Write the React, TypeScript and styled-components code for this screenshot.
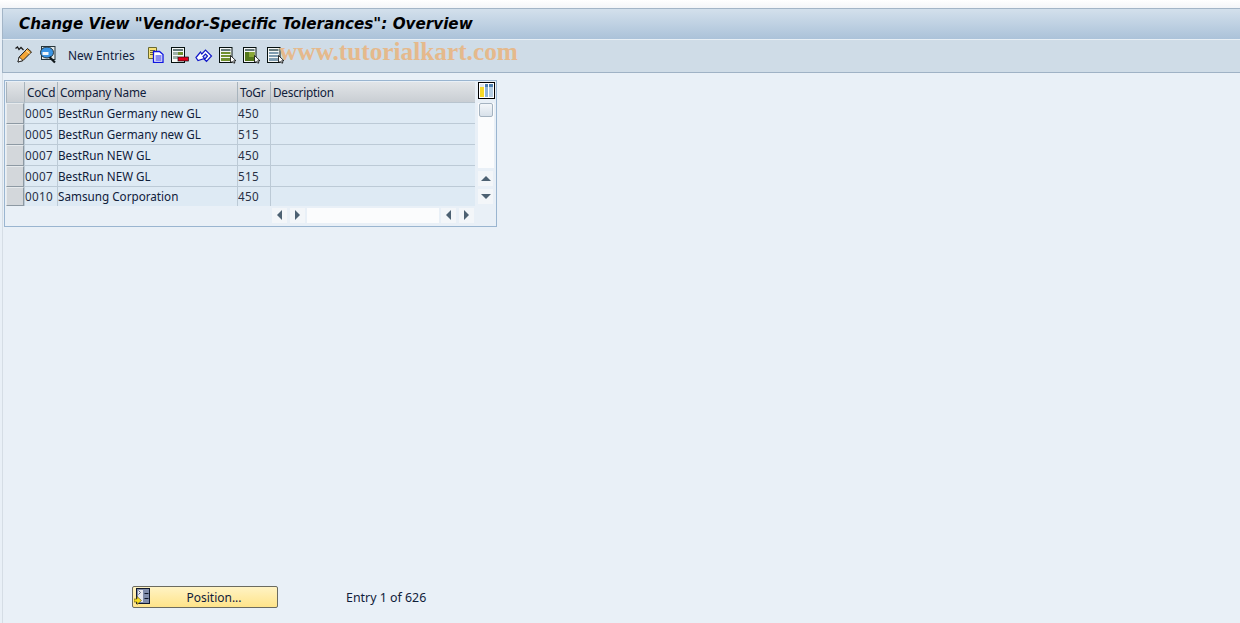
import React from "react";
import styled, { createGlobalStyle } from "styled-components";

const rows = [
  { code: "0005", name: "BestRun Germany new GL", group: "450" },
  { code: "0005", name: "BestRun Germany new GL", group: "515" },
  { code: "0007", name: "BestRun NEW GL", group: "450" },
  { code: "0007", name: "BestRun NEW GL", group: "515" },
  { code: "0010", name: "Samsung Corporation", group: "450" },
];

const Cursor = () => (
  <path d="M11.5 8.5v7.5l1.6-1.6 1.4 1.6h1.5l-1.4-2.2h2.4z" fill="#fff" stroke="#000" strokeWidth="0.8" />
);

const ListIcon: React.FC<{ fill: string; accent?: string; lines?: boolean }> = ({ fill, accent, lines }) => (
  <svg width="18" height="17" viewBox="0 0 18 17">
    <rect x="0.5" y="0.5" width="12.5" height="15" fill="#f6f8f6" stroke="#05100f" />
    <rect x="2" y="2" width="9.5" height="2" fill="#65787a" />
    <rect x="2" y="5" width="9.5" height="9" fill={fill} />
    {accent && <rect x="6" y="5" width="5.5" height="5" fill={accent} />}
    {lines && <path d="M2 7.5h9.5M2 10.5h9.5" stroke="#f6f8f6" />}
    <Cursor />
  </svg>
);

const App: React.FC = () => (
  <>
    <GlobalStyle />
    <Page>
      <TitleBar>
        <Title>Change View "Vendor-Specific Tolerances": Overview</Title>
      </TitleBar>
      <Toolbar>
        <ToolIcon>
          <svg width="18" height="18" viewBox="0 0 18 18">
            <path d="M0.5 2.5l2-1.5 1.5 2.5 2-2 2.5 2.5" fill="none" stroke="#1b1b1b" strokeWidth="1.3" />
            <path d="M3 16l1.2-5 8.3-8.5 4 3.5-8.500 8.500z" fill="#f3a535" stroke="#1b1b1b" />
            <path d="M11 4.500l3.500 3" stroke="#fff3c0" />
            <path d="M3 16l1.200-5 3.800 3.500z" fill="#fff" stroke="#1b1b1b" strokeWidth="0.8" />
          </svg>
        </ToolIcon>
        <ToolIcon>
          <svg width="18" height="18" viewBox="0 0 18 18">
            <rect x="2.500" y="0.500" width="13.500" height="13" fill="#dfe6e8" stroke="#26343a" />
            <ellipse cx="8" cy="6.500" rx="6.500" ry="5.500" fill="#3a94e4" stroke="#26343a" />
            <path d="M3.500 6h6v3h-6z" fill="#f3f8fc" />
            <path d="M10.500 11l5.500 5.500" stroke="#10181c" strokeWidth="2.200" />
          </svg>
        </ToolIcon>
        <ToolLabel>New Entries</ToolLabel>
        <IconGroup>
          <ToolIcon>
            <svg width="16" height="16" viewBox="0 0 16 16">
              <path d="M0.500 0.500h8v11h-8z" fill="#f7e27a" stroke="#6a6a30" />
              <path d="M2 3.500h5M2 5.500h5M2 7.500h5" stroke="#6a6a30" />
              <path d="M5.500 4.500h6l3.500 3v8h-9.500z" fill="#fff" stroke="#1016e0" strokeWidth="1.300" />
              <path d="M7.500 9h6M7.500 11h6M7.500 13h6" stroke="#1016e0" />
            </svg>
          </ToolIcon>
          <ToolIcon>
            <svg width="18" height="17" viewBox="0 0 18 17">
              <rect x="0.500" y="0.500" width="13" height="15" fill="#f6f8f6" stroke="#05100f" />
              <rect x="2" y="2" width="10" height="2" fill="#65787a" />
              <rect x="2" y="5" width="5" height="3" fill="#9fb0a8" />
              <rect x="7" y="5" width="5" height="3" fill="#6f8f2e" />
              <rect x="2" y="9" width="5" height="3" fill="#9fb0a8" />
              <rect x="7" y="10" width="10.500" height="4" fill="#e4001b" stroke="#111" strokeWidth="0.700" />
            </svg>
          </ToolIcon>
          <ToolIcon>
            <svg width="18" height="17" viewBox="0 0 18 17">
              <path
                d="M1 10.500L5.500 5l1.300 2L10.500 3l6 6-5 5.500-2-2 3-3.500-2-2-2.500 2.500 1.500 2L3 13.500z"
                fill="#fff"
                stroke="#1016c8"
                strokeWidth="1.200"
              />
            </svg>
          </ToolIcon>
          <ToolIcon>
            <ListIcon fill="#71912e" lines />
          </ToolIcon>
          <ToolIcon>
            <ListIcon fill="#55781c" accent="#8aa838" />
          </ToolIcon>
          <ToolIcon>
            <ListIcon fill="#7f9cb0" lines />
          </ToolIcon>
        </IconGroup>
      </Toolbar>
      <Watermark>www.tutorialkart.com</Watermark>
      <Content>
        <TablePanel>
          <TableBody>
            <Grid>
              <HeaderSelector />
              <HeaderCell>CoCd</HeaderCell>
              <HeaderCell>Company Name</HeaderCell>
              <HeaderCell>ToGr</HeaderCell>
              <HeaderCell>Description</HeaderCell>
              {rows.map((row, i) => (
                <React.Fragment key={`${row.code}-${row.group}-${i}`}>
                  <RowSelector />
                  <Cell $last={i === rows.length - 1} $digits>{row.code}</Cell>
                  <Cell $last={i === rows.length - 1}>{row.name}</Cell>
                  <Cell $last={i === rows.length - 1} $digits>{row.group}</Cell>
                  <Cell $last={i === rows.length - 1} />
                </React.Fragment>
              ))}
            </Grid>
            <VerticalBar>
              <ConfigButton>
                <svg width="17" height="17" viewBox="0 0 17 17">
                  <rect x="0.500" y="0.500" width="16" height="16" fill="#fff" stroke="#000" />
                  <rect x="2" y="2" width="4" height="3" fill="#dfe7ee" />
                  <rect x="7" y="2" width="3" height="3" fill="#4d7fb0" />
                  <rect x="11" y="2" width="4" height="3" fill="#4d7fb0" />
                  <rect x="2" y="5" width="4" height="10" fill="#f6d928" />
                  <rect x="7" y="5" width="3" height="10" fill="#8fb4d8" />
                  <rect x="11" y="5" width="4" height="10" fill="#b5cde2" />
                </svg>
              </ConfigButton>
              <Track>
                <Thumb />
              </Track>
              <ScrollButton>
                <Arrow $dir="up" />
              </ScrollButton>
              <ScrollButton>
                <Arrow $dir="down" />
              </ScrollButton>
            </VerticalBar>
          </TableBody>
          <HorizontalBar>
            <ScrollButton>
              <Arrow $dir="left" />
            </ScrollButton>
            <ScrollButton>
              <Arrow $dir="right" />
            </ScrollButton>
            <HorizontalTrack />
            <ScrollButton>
              <Arrow $dir="left" />
            </ScrollButton>
            <ScrollButton>
              <Arrow $dir="right" />
            </ScrollButton>
          </HorizontalBar>
        </TablePanel>
        <Footer>
          <PositionButton>
            <PositionIcon>
              <svg width="16" height="17" viewBox="0 0 16 17">
                <rect x="2.500" y="0.500" width="13" height="15" fill="#7f8cab" stroke="#10182c" />
                <rect x="4" y="2" width="5" height="12" fill="#e6e8f0" />
                <path d="M10.500 5.500h4M10.500 10.500h4" stroke="#10182c" />
                <path d="M4.500 2.500l2 2-2 2" fill="none" stroke="#5a6070" />
                <path d="M0 11h3V8.500l4.500 4L3 16.500V14H0z" fill="#f8dc20" stroke="#5a5010" strokeWidth="0.600" />
              </svg>
            </PositionIcon>
            Position...
          </PositionButton>
          <EntryText>Entry 1 of 626</EntryText>
        </Footer>
      </Content>
    </Page>
  </>
);

const GlobalStyle = createGlobalStyle`
  html, body {
    margin: 0;
    padding: 0;
    background: #ffffff;
    overflow: hidden;
  }
`;

const Page = styled.div`
  position: relative;
  width: 1240px;
  height: 623px;
  box-sizing: border-box;
  padding: 8px 0 0 2px;
  display: flex;
  flex-direction: column;
  font-family: "Noto Sans", "DejaVu Sans", sans-serif;
  font-size: 12px;
  color: #10203a;
  background: linear-gradient(#ffffff, #f3f5f8 8px, #e9f0f7 8px);
`;

const TitleBar = styled.div`
  height: 31px;
  box-sizing: border-box;
  padding-left: 16px;
  display: flex;
  align-items: center;
  border-top: 1px solid #a3b5c7;
  border-left: 1px solid #a3b5c7;
  background: linear-gradient(#d3e0ec, #abc2d9);
`;

const Title = styled.h1`
  margin: 0;
  font-family: "DejaVu Sans", sans-serif;
  font-size: 15.2px;
  font-weight: bold;
  font-style: italic;
  color: #000000;
  white-space: nowrap;
`;

const Toolbar = styled.div`
  height: 34px;
  box-sizing: border-box;
  padding: 0 0 2px 12px;
  display: flex;
  align-items: center;
  background: #cfdce7;
  border-top: 1px solid #e8eff5;
  border-left: 1px solid #a3b5c7;
  border-bottom: 1px solid #9fb2c5;
`;

const ToolIcon = styled.span`
  width: 18px;
  height: 18px;
  margin-right: 6px;
  display: inline-flex;
  align-items: center;
  justify-content: center;
`;

const ToolLabel = styled.span`
  margin: 0 12px 0 5px;
  font-size: 11.9px;
  color: #10203a;
  white-space: nowrap;
`;

const IconGroup = styled.div`
  display: flex;
`;

const Watermark = styled.div`
  position: absolute;
  left: 279px;
  top: 37px;
  font-family: "Liberation Serif", serif;
  font-size: 25.3px;
  font-weight: bold;
  color: #e5b98c;
  white-space: nowrap;
  pointer-events: none;
`;

const Content = styled.div`
  flex: 1;
  display: flex;
  flex-direction: column;
  padding: 7px 0 0 1px;
  background: #e9f0f7;
  border-left: 1px solid #d5dde5;
`;

const TablePanel = styled.div`
  width: 493px;
  height: 147px;
  box-sizing: border-box;
  padding: 1px;
  border: 1px solid #9ab5d0;
  background: #e9f0f7;
`;

const TableBody = styled.div`
  display: flex;
  height: 124px;
`;

const Grid = styled.div`
  width: 469px;
  display: grid;
  grid-template-columns: 18px 33px 180px 33px 205px;
  grid-template-rows: 21px repeat(4, 21px) 19px;
`;

const HeaderCell = styled.div`
  box-sizing: border-box;
  padding: 0 0 1px 2px;
  display: flex;
  align-items: center;
  white-space: nowrap;
  overflow: hidden;
  font-size: 11.8px;
  letter-spacing: -0.25px;
  color: #10203a;
  background: linear-gradient(#e2e5e8, #c9ced3);
  border-left: 1px solid #a8b4bd;
  border-bottom: 1px solid #b8c4ce;
`;

const HeaderSelector = styled.div`
  background: linear-gradient(#e2e5e8, #c9ced3);
  border-left: 1px solid #a8b4bd;
  border-bottom: 1px solid #b8c4ce;
`;

const RowSelector = styled.div`
  box-sizing: border-box;
  background: #d3d7db;
  border: 1px solid #e6eaed;
  border-right-color: #8d99a3;
  border-bottom-color: #8d99a3;
`;

const Cell = styled.div<{ $last?: boolean; $digits?: boolean }>`
  box-sizing: border-box;
  padding-bottom: ${({ $last }) => ($last ? "2px" : "0")};
  display: flex;
  align-items: center;
  white-space: nowrap;
  overflow: hidden;
  font-size: 11.7px;
  letter-spacing: ${({ $digits }) => ($digits ? "0.3px" : "0")};
  color: ${({ $digits }) => ($digits ? "#283044" : "#10203a")};
  background: #deeaf4;
  border-left: 1px solid #bccad6;
  border-bottom: ${({ $last }) => ($last ? "0" : "1px solid #bccad6")};
`;

const VerticalBar = styled.div`
  width: 17px;
  margin-left: 3px;
  display: flex;
  flex-direction: column;
  align-items: flex-start;
`;

const ConfigButton = styled.div`
  height: 21px;
  display: flex;
  align-items: flex-start;
`;

const Track = styled.div`
  width: 16px;
  height: 65px;
  box-sizing: border-box;
  padding-left: 1px;
  background: #fbfcfd;
`;

const Thumb = styled.div`
  width: 14px;
  height: 14px;
  box-sizing: border-box;
  border: 1px solid #a5b3c0;
  border-radius: 2px;
  background: linear-gradient(#f4f7fa, #d8e1ea);
`;

const ScrollButton = styled.div`
  width: 15px;
  height: 15px;
  margin-top: 3px;
  display: flex;
  align-items: center;
  justify-content: center;
  background: #f3f6f9;
`;

const Arrow = styled.span<{ $dir: "up" | "down" | "left" | "right" }>`
  width: 0;
  height: 0;
  border-style: solid;
  border-color: transparent;
  ${({ $dir }) =>
    $dir === "up" && "border-width: 0 5px 5px; border-bottom-color: #4d6172;"}
  ${({ $dir }) =>
    $dir === "down" && "border-width: 5px 5px 0; border-top-color: #4d6172;"}
  ${({ $dir }) =>
    $dir === "left" && "border-width: 5px 5px 5px 0; border-right-color: #4d6172;"}
  ${({ $dir }) =>
    $dir === "right" && "border-width: 5px 0 5px 5px; border-left-color: #4d6172;"}
`;

const HorizontalBar = styled.div`
  width: 468px;
  height: 18px;
  display: flex;
  justify-content: flex-end;
  align-items: center;
  gap: 3px;

  ${ScrollButton} {
    margin-top: 0;
  }
`;

const HorizontalTrack = styled.div`
  width: 132px;
  height: 15px;
  margin: 0 -1px;
  background: #fbfcfd;
`;

const Footer = styled.div`
  margin-top: 359px;
  display: flex;
  align-items: center;
`;

const PositionButton = styled.div`
  position: relative;
  width: 146px;
  height: 22px;
  margin-left: 128px;
  box-sizing: border-box;
  display: flex;
  align-items: center;
  justify-content: center;
  padding-left: 18px;
  border: 1px solid #6b6b60;
  border-radius: 2px;
  color: #10203a;
  background: linear-gradient(#fff3c4, #ffe48a);
`;

const PositionIcon = styled.span`
  position: absolute;
  left: 1px;
  top: 1px;
  width: 16px;
  height: 17px;
`;

const EntryText = styled.span`
  margin-left: 68px;
  font-size: 12.4px;
  color: #10203a;
  white-space: nowrap;
`;

export default App;
